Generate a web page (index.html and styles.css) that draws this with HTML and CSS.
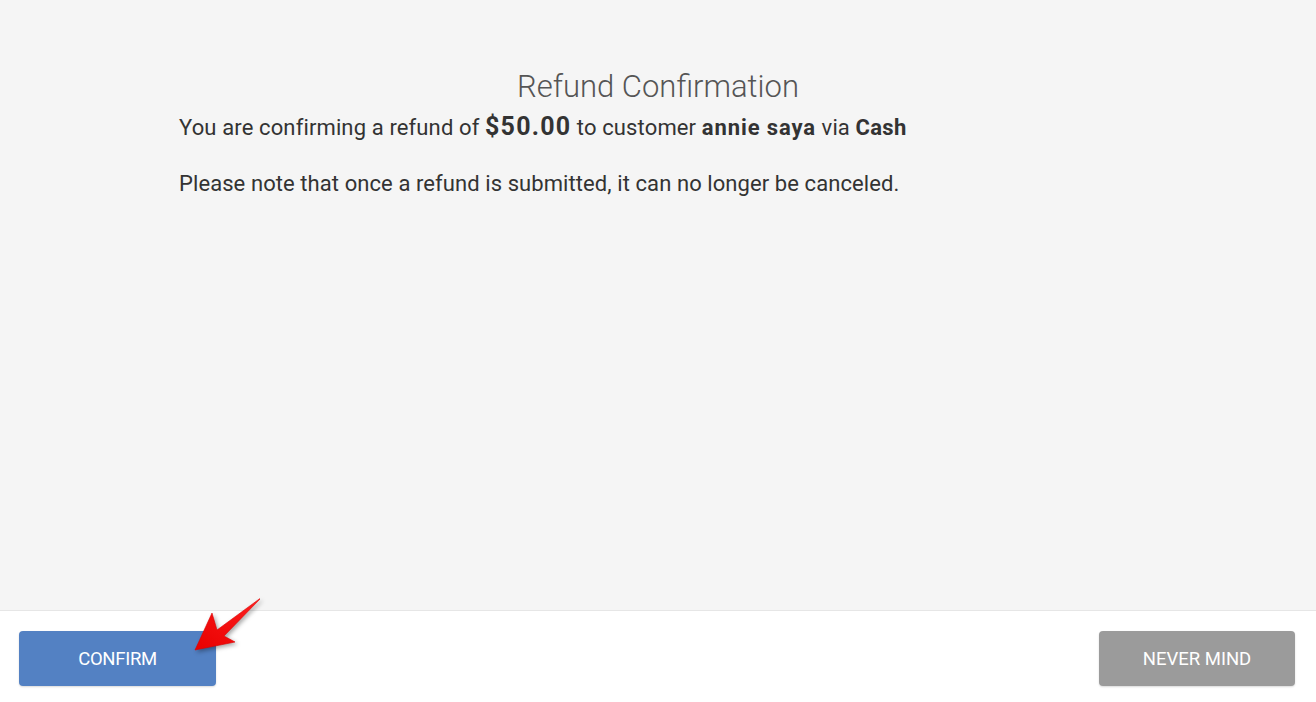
FILE: index.html
```html
<!DOCTYPE html>
<html>
<head>
<meta charset="utf-8">
<link rel="stylesheet" href="styles.css">
</head>
<body>
<div class="page">
  <main class="content">
    <h1 class="title">Refund Confirmation</h1>
    <div class="body">
      <p class="line first">You are confirming a refund of <strong class="amount">$50.00</strong> to customer <strong class="name">annie saya</strong> via <strong>Cash</strong></p>
      <p class="line note">Please note that once a refund is submitted, it can no longer be canceled.</p>
    </div>
  </main>
  <footer class="footer">
    <button class="btn btn-confirm">CONFIRM</button>
    <button class="btn btn-cancel">NEVER MIND</button>
    <svg class="arrow" width="80" height="64" viewBox="180 590 80 64">
      <defs>
        <linearGradient id="ag" x1="0" y1="1" x2="1" y2="0">
          <stop offset="0" stop-color="#e80000"/>
          <stop offset="1" stop-color="#ff2020"/>
        </linearGradient>
      </defs>
      <polygon points="195,650 212,613 217,630 262,597 224,636 235,642" fill="url(#ag)" stroke="#d00" stroke-width="0.6" stroke-linejoin="round"/>
    </svg>
  </footer>
</div>
</body>
</html>
```
FILE: styles.css
```css
html, body {
  margin: 0;
  padding: 0;
}
body {
  font-family: Roboto, "Liberation Sans", sans-serif;
  color: #333;
  background: #fff;
}
.page {
  width: 1316px;
  height: 702px;
  display: flex;
  flex-direction: column;
}
.content {
  height: 611px;
  background: #f5f5f5;
  border-bottom: 1px solid #e6e6e6;
  box-sizing: border-box;
  padding-top: 68px;
}
.title {
  margin: 0;
  text-align: center;
  font-size: 31px;
  font-weight: 300;
  color: #555;
  line-height: 38px;
}
.body {
  padding-left: 179px;
  margin-top: 6px;
}
.line {
  margin: 0;
  font-size: 22px;
  line-height: 30px;
  color: #333;
}
.first {
  letter-spacing: 0.13px;
}
.line strong {
  font-weight: 700;
  letter-spacing: 0.3px;
}
.line .amount {
  font-size: 25px;
  letter-spacing: 1.2px;
}
.line .name {
  letter-spacing: 0.9px;
}
.note {
  margin-top: 26px;
  letter-spacing: 0.08px;
}
.footer {
  position: relative;
  flex: 1;
  background: #fff;
  display: flex;
  justify-content: space-between;
  align-items: flex-start;
  padding: 20px 21px 0 19px;
}
.btn {
  width: 197px;
  height: 55px;
  border: none;
  border-radius: 4px;
  font-family: Roboto, "Liberation Sans", sans-serif;
  font-size: 18.5px;
  letter-spacing: -0.3px;
  color: #fff;
  box-shadow: 0 1px 2px rgba(0,0,0,0.15);
}
.btn-confirm {
  background: #5381c3;
}
.btn-cancel {
  background: #9b9b9b;
  width: 196px;
  letter-spacing: 0;
}
.arrow {
  position: absolute;
  left: 180px;
  top: -21px;
  filter: drop-shadow(2px 2px 2px rgba(0,0,0,0.35));
}
```
